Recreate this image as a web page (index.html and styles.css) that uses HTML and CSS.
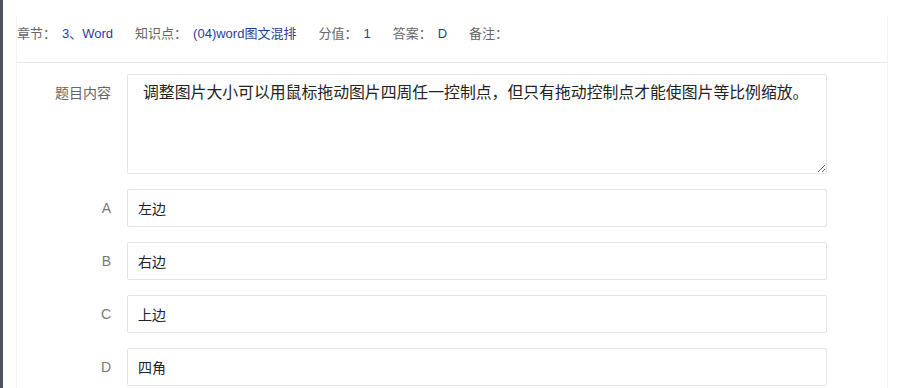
FILE: index.html
```html
<!DOCTYPE html>
<html lang="zh-CN">
<head>
    <meta charset="UTF-8">
    <meta name="viewport" content="width=device-width, initial-scale=1.0">
    <title>题目详情</title>
    <link rel="stylesheet" href="styles.css">
</head>
<body>
    <div class="layout">
        <div class="side-strip"></div>
        <div class="main">
            <div class="card">
                <div class="meta">
                    <span class="meta-item"><span class="meta-label">章节：</span><span class="meta-value">3、Word</span></span>
                    <span class="meta-item"><span class="meta-label">知识点：</span><span class="meta-value">(04)word图文混排</span></span>
                    <span class="meta-item"><span class="meta-label">分值：</span><span class="meta-value">1</span></span>
                    <span class="meta-item"><span class="meta-label">答案：</span><span class="meta-value">D</span></span>
                    <span class="meta-item"><span class="meta-label">备注：</span><span class="meta-value"></span></span>
                </div>

                <div class="form">
                    <div class="form-row form-row-top">
                        <label class="form-label" for="content">题目内容</label>
                        <textarea id="content" class="form-textarea" readonly>调整图片大小可以用鼠标拖动图片四周任一控制点，但只有拖动控制点才能使图片等比例缩放。</textarea>
                    </div>
                    <div class="form-row">
                        <label class="form-label option-label" for="optA">A</label>
                        <input id="optA" class="form-input" type="text" value="左边" readonly>
                    </div>
                    <div class="form-row">
                        <label class="form-label option-label" for="optB">B</label>
                        <input id="optB" class="form-input" type="text" value="右边" readonly>
                    </div>
                    <div class="form-row">
                        <label class="form-label option-label" for="optC">C</label>
                        <input id="optC" class="form-input" type="text" value="上边" readonly>
                    </div>
                    <div class="form-row">
                        <label class="form-label option-label" for="optD">D</label>
                        <input id="optD" class="form-input" type="text" value="四角" readonly>
                    </div>
                </div>
            </div>
        </div>
    </div>
</body>
</html>
```

FILE: styles.css
```css
body {
    margin: 0;
    padding: 0;
    background-color: #fff;
    font-family: "Liberation Sans", Arial, "Noto Sans CJK SC", sans-serif;
    color: #222;
}

.layout {
    display: flex;
    min-height: 388px;
}

.side-strip {
    width: 3px;
    background-color: #4f525a;
    flex-shrink: 0;
}

.main {
    padding-left: 13px;
}

.card {
    width: 870px;
    margin-top: 15px;
    min-height: 373px;
    border-left: 1px solid #f3f3f3;
    border-right: 1px solid #f3f3f3;
}

.meta {
    display: flex;
    padding: 9px 0 18px 0;
    border-bottom: 1px solid #e8e8e8;
    font-size: 13px;
    line-height: 20px;
}

.meta-item {
    margin-right: 22px;
}

.meta-label {
    color: #666;
    margin-right: 6px;
}

.meta-value {
    color: #1f3f9c;
}

.form {
    padding-top: 11px;
}

.form-row {
    display: flex;
    align-items: center;
    margin-bottom: 15px;
}

.form-row-top {
    align-items: flex-start;
}

.form-label {
    width: 94px;
    margin-right: 16px;
    text-align: right;
    font-size: 14px;
    color: #666;
    line-height: 24px;
}

.form-row-top .form-label {
    padding-top: 7px;
}

.option-label {
    color: #777;
}

.form-textarea,
.form-input {
    box-sizing: border-box;
    width: 700px;
    border: 1px solid #e4e4e4;
    border-radius: 2px;
    background-color: #fff;
    color: #222;
    font-family: "Liberation Sans", Arial, "Noto Sans CJK SC", sans-serif;
    outline: none;
}

.form-textarea {
    height: 100px;
    padding: 6px 8px 6px 15px;
    font-size: 15.85px;
    line-height: 24px;
}

.form-input {
    height: 38px;
    padding: 0 10px;
    font-size: 14px;
}
```
